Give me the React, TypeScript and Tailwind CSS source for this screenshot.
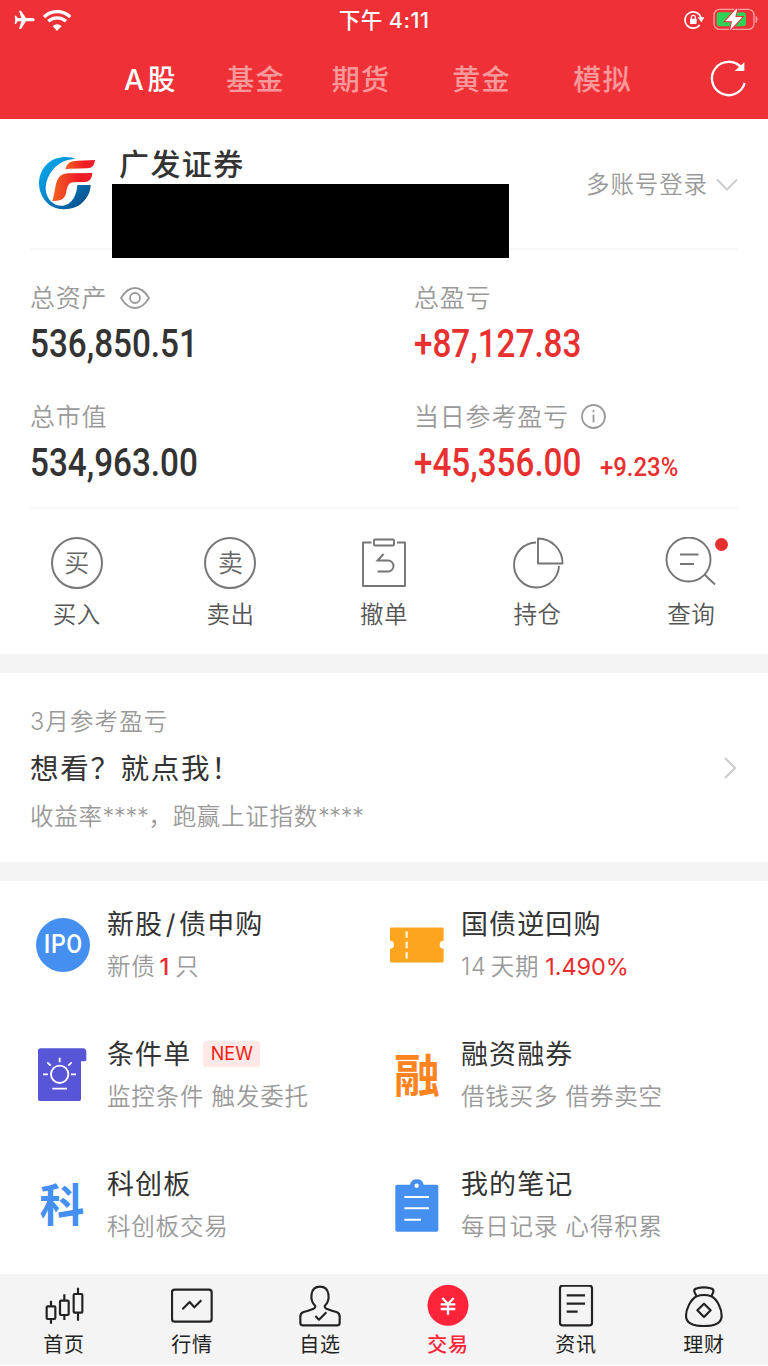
import { ReactNode } from "react";
import clsx from "clsx";

interface Service {
  id: string;
  title: ReactNode;
  desc: ReactNode;
  icon: ReactNode;
  isNew?: boolean;
}

const tabs = [
  { name: "A股", width: "w-[104px]" },
  { name: "基金", width: "w-[106px]" },
  { name: "期货", width: "w-[105px]" },
  { name: "黄金", width: "w-[136px]" },
  { name: "模拟", width: "w-[106px]" },
];

function StatusBar() {
  return (
    <div className="grid h-10 grid-cols-3 items-center text-white">
      <div className="flex items-center gap-2 pl-[14px]">
        <svg width="21" height="20" viewBox="43 30 63 60" fill="white">
          <path d="M58 32h6l15 22h18c5 0 8 2 8 5s-3 5-8 5H79L64 87h-6l7-23H54l-5 8h-4l2-13-2-12h4l5 7h11Z" />
        </svg>
        <svg width="28" height="21" viewBox="127 23 84 63">
          <path d="M130 44C153 22 186 22 209 44" fill="none" stroke="white" strokeWidth="10" />
          <path d="M143 57C158 43 181 43 196 57" fill="none" stroke="white" strokeWidth="10" />
          <path d="M156 71Q169 61 183 71L169 86Z" fill="white" />
        </svg>
      </div>
      <div className="text-center text-[21.500px] leading-10 font-medium tracking-[0.5px] whitespace-nowrap">
        下午 4:11
      </div>
      <div className="flex items-center justify-end gap-[9px] pr-[9px]">
        <svg width="20" height="20" viewBox="899 31 60 60" fill="none" stroke="white">
          <path d="M946 76A24.500 24.500 0 1 1 950 54" strokeWidth="5" />
          <path d="M940 53h20l-9 15Z" fill="white" stroke="none" />
          <rect x="917" y="57" width="20" height="16" rx="2" fill="white" stroke="none" />
          <path d="M921 58v-5a6 6 0 0 1 12 0v5" strokeWidth="3.500" />
        </svg>
        <svg width="46" height="24" viewBox="985 22 138 72">
          <rect x="988" y="26" width="120" height="60" rx="17" fill="none" stroke="#f9a0a3" strokeWidth="4" />
          <path d="M1114 47q8 9 0 19Z" fill="#f9a0a3" stroke="#f9a0a3" strokeWidth="2" />
          <rect x="996" y="35" width="88" height="42" rx="9" fill="#30d158" />
          <path
            d="M1055 24L1022 62h20l-6 27 37-40h-21l6-25Z"
            fill="white"
            stroke="#ef3137"
            strokeWidth="6"
            paintOrder="stroke"
          />
        </svg>
      </div>
    </div>
  );
}

function BrokerLogo() {
  return (
    <svg width="60" height="55" viewBox="111 78 180 165">
      <defs>
        <linearGradient id="ring" x1="0" y1="0" x2="1" y2="1">
          <stop offset="0" stopColor="#05b0f0" />
          <stop offset=".45" stopColor="#0786cc" />
          <stop offset="1" stopColor="#07427f" />
        </linearGradient>
        <linearGradient id="flag" x1="0" y1="0" x2="1" y2="0">
          <stop offset="0" stopColor="#f26322" />
          <stop offset=".65" stopColor="#ef1c24" />
          <stop offset="1" stopColor="#f02028" />
        </linearGradient>
      </defs>
      <path
        d="M226 86C212 79 165 74 138 105C108 138 110 190 145 222C168 242 220 246 248 217C265 200 271 185 272 165L232 165C230 195 217 222 190 227C160 230 136 205 137 172C140 132 168 100 203 90Z"
        fill="url(#ring)"
      />
      <path
        d="M196 118C200 100 212 92 232 92L285 90C283 108 275 114 262 115L215 116C207 116 200 118 196 118Z"
        fill="url(#flag)"
      />
      <path
        d="M157 213C165 190 165 160 175 145C182 133 195 130 210 130L277 129C276 147 268 155 255 156L220 157C205 157 202 170 198 190C194 208 180 214 157 213Z"
        fill="url(#flag)"
      />
    </svg>
  );
}

function Amount({ value, className }: { value: string; className?: string }) {
  return (
    <span
      className={clsx(
        "inline-block origin-left scale-x-[0.875] pt-px font-['Roboto'] text-[38px] leading-[46px] font-medium",
        className,
      )}
    >
      {value}
    </span>
  );
}

function Label({ children }: { children: ReactNode }) {
  return (
    <div className="flex h-[46px] items-center pt-px text-[25px] leading-[46px] font-[350] tracking-[0.8px] text-[#999]">
      {children}
    </div>
  );
}

const actions = [
  {
    name: "买入",
    icon: (
      <div className="flex size-[52px] items-center justify-center rounded-full border-2 border-[#777] text-[25px] leading-none font-[350] text-[#666]">
        买
      </div>
    ),
  },
  {
    name: "卖出",
    icon: (
      <div className="flex size-[52px] items-center justify-center rounded-full border-2 border-[#777] text-[25px] leading-none font-[350] text-[#666]">
        卖
      </div>
    ),
  },
  {
    name: "撤单",
    icon: (
      <svg width="52" height="52" viewBox="0 0 52 52" fill="none" stroke="#757575" strokeWidth="1.900">
        <path d="M13.500 5.500H5v43.500h42V5.500H39" strokeLinejoin="round" />
        <rect x="16" y="2.500" width="20" height="6" rx="1" />
        <path d="M25.500 17l-6 6.500h10.500a5.500 5.500 0 0 1 0 11H19.500" />
      </svg>
    ),
  },
  {
    name: "持仓",
    icon: (
      <svg width="52" height="52" viewBox="0 0 52 52" fill="none" stroke="#757575" strokeWidth="1.900">
        <path d="M24 5.500A22.500 22.500 0 1 0 47 29" />
        <path d="M26 1.500V26.500H50.500A24.500 24.500 0 0 0 26 1.500Z" strokeLinejoin="round" />
      </svg>
    ),
  },
  {
    name: "查询",
    icon: (
      <div className="relative">
        <svg width="52" height="52" viewBox="0 0 52 52" fill="none" stroke="#757575" strokeWidth="1.900">
          <circle cx="23.500" cy="22.500" r="22" />
          <path d="M39.500 37.500L50 47.500M15 17.500h18.500M15 27h14" />
        </svg>
        <span className="absolute top-[1px] -right-[11px] size-[13px] rounded-full bg-[#e93030]" />
      </div>
    ),
  },
];

const services: Service[] = [
  {
    id: "ipo",
    title: (
      <>
        新股<span className="mx-[2.500px]">/</span>债申购
      </>
    ),
    desc: (
      <>
        新债<span className="mr-[5px] ml-[4px] font-medium text-[#eb2c2c]">1</span>只
      </>
    ),
    icon: (
      <div className="flex size-[54px] items-center justify-center rounded-full bg-[#448fef] font-['Roboto'] text-[25px] font-medium text-white">
        <span className="scale-x-[0.92] tracking-[0.8px]">IPO</span>
      </div>
    ),
  },
  {
    id: "repo",
    title: "国债逆回购",
    desc: (
      <>
        14<span className="mr-[6px] ml-[4px]">天期</span>
        <span className="font-normal tracking-[-0.1px] text-[#eb2c2c]">1.490%</span>
      </>
    ),
    icon: (
      <svg width="54" height="36" viewBox="18 142 162 107">
        <path
          d="M22 143H175q4 0 4 4V183a12 12 0 0 0 0 24V244q0 4-4 4H22q-4 0-4-4V207a12 12 0 0 0 0-24V147q0-4 4-4Z"
          fill="#fea51f"
        />
        <path d="M68 155v19M68 186v19M68 217v19" stroke="white" strokeWidth="6" />
      </svg>
    ),
  },
  {
    id: "condition",
    title: "条件单",
    desc: "监控条件 触发委托",
    isNew: true,
    icon: (
      <svg width="50" height="54" viewBox="114 503 150 162">
        <path
          d="M122 504H248q11 0 11 11V538q0 5-5 5H243V657q0 5-5 5H119q-5 0-5-5V512q0-8 8-8Z"
          fill="#5855d6"
        />
        <g fill="none" stroke="white" strokeWidth="5.500">
          <circle cx="179" cy="582" r="26" />
          <path d="M129 582h15M213 582h15M179 532v14M142 546l10 10M215 546l-10 10M157 625h44" />
        </g>
      </svg>
    ),
  },
  {
    id: "margin",
    title: "融资融券",
    desc: "借钱买多 借券卖空",
    icon: <span className="text-[46px] leading-[50px] font-bold text-[#ff841f]">融</span>,
  },
  {
    id: "star",
    title: "科创板",
    desc: "科创板交易",
    icon: (
      <span className="mt-[2px] mr-[2px] text-[45px] leading-[50px] font-bold text-[#448fef]">
        科
      </span>
    ),
  },
  {
    id: "notes",
    title: "我的笔记",
    desc: "每日记录 心得积累",
    icon: (
      <svg width="44" height="54" viewBox="33 892 132 162">
        <path
          d="M39 912H78a21 21 0 0 1 41 0H158q5 0 5 5V1048q0 5-5 5H39q-5 0-5-5V917q0-5 5-5Z"
          fill="#448fef"
        />
        <circle cx="98" cy="915" r="6.500" fill="white" />
        <path d="M61 949h74M61 983h74M61 1017h50" stroke="white" strokeWidth="6" />
      </svg>
    ),
  },
];

const navItems = [
  {
    name: "首页",
    icon: (
      <g>
        <rect x="140" y="109" width="26" height="38" rx="3" />
        <rect x="180" y="92" width="26" height="43" rx="3" />
        <rect x="221" y="72" width="26" height="56" rx="3" />
        <path d="M153 92v17M153 147v14M193 73v19M193 135v15M234 53v19M234 128v24" />
      </g>
    ),
    viewBox: "129 45 126 126",
  },
  {
    name: "行情",
    icon: (
      <g>
        <rect x="518" y="59" width="119" height="96" rx="8" />
        <path d="M549 118l22-22 14 16 21-21" />
      </g>
    ),
    viewBox: "515 45 126 126",
  },
  {
    name: "自选",
    icon: (
      <g>
        <path d="M947 108C930 93 929 50 961 50S992 93 975 108C974 115 978 117 1010 126Q1020 129 1020 139V159Q1020 166 1012 166H910Q902 166 902 159V139Q902 129 912 126C944 117 948 115 947 108Z" />
        <path d="M947 138l11 11 22-22" />
      </g>
    ),
    viewBox: "898 45 126 126",
  },
  {
    name: "交易",
    icon: (
      <g stroke="none">
        <circle cx="193" cy="106" r="61.500" fill="#ff2439" />
        <path d="M176 84l17 18 17-18M193 102v32M171 103h44M171 117h44" stroke="white" strokeWidth="7" />
      </g>
    ),
    viewBox: "130 45 126 126",
    active: true,
  },
  {
    name: "资讯",
    icon: (
      <g>
        <rect x="529" y="47" width="96" height="119" rx="8" />
        <path d="M549 76h55M549 101h55M549 125h33" />
      </g>
    ),
    viewBox: "514 45 126 126",
  },
  {
    name: "理财",
    icon: (
      <g>
        <path d="M938 78C930 65 928 59 940 56Q960 50 981 56C993 59 990 66 984 78" />
        <path d="M939 80Q961 72 983 80C1002 90 1014 119 1014 138C1014 159 995 169 961 169S907 159 907 138C907 119 920 90 939 80Z" />
        <path d="M961 102l20 20-20 20-20-20Z" />
      </g>
    ),
    viewBox: "898 46 126 126",
  },
];

export default function App() {
  return (
    <div className="flex h-[1366px] w-[768px] flex-col overflow-hidden bg-white font-['Inter','Noto_Sans_CJK_SC',sans-serif] text-[#333]">
      <header className="h-[119px] bg-[#ef3137]">
        <StatusBar />
        <nav className="flex h-[78px] items-center pl-[98px] text-[28px] font-medium tracking-[1.2px] text-white">
          {tabs.map((tab, i) => (
            <span
              key={tab.name}
              className={clsx(
                "pt-px text-center",
                tab.width,
                i === 0 ? "pl-[3px] tracking-[3.500px]" : "pl-px opacity-50",
              )}
            >
              {tab.name}
            </span>
          ))}
          <svg
            className="ml-[55px]"
            width="37"
            height="38"
            viewBox="979 177 111 114"
            fill="none"
            stroke="white"
            strokeWidth="7"
          >
            <path d="M1083 246A50 50 0 1 1 1073 200" />
            <path d="M1080 188v20h-22Z" fill="white" strokeWidth="4" />
          </svg>
        </nav>
      </header>

      <section className="relative mx-[30px] flex h-[131px] border-b-2 border-[#f7f7f7]">
        <div className="pt-[37px] pl-[7px]">
          <BrokerLogo />
        </div>
        <h1 className="mt-[24px] ml-[22px] text-[30px] leading-[42px] font-medium tracking-[1.4px]">
          广发证券
        </h1>
        <div className="ml-auto flex h-[132px] items-center gap-2 text-[23.500px] font-[350] tracking-[0.9px] text-[#999]">
          多账号登录
          <svg width="22" height="14" viewBox="0 0 22 14" fill="none" stroke="#ccc" strokeWidth="2">
            <path d="M1 1.500l10 10 10-10" />
          </svg>
        </div>
        {/* masked account number */}
        <div className="absolute top-[65px] left-[82px] h-[74px] w-[396.500px] bg-black" />
      </section>

      <section className="mx-[30px] grid h-[259px] grid-cols-[384px_1fr] grid-rows-[119px_1fr] border-b-2 border-[#f7f7f7] pt-[24px]">
        <div>
          <Label>
            总资产
            <svg
              className="ml-[13px]"
              width="30"
              height="22"
              viewBox="0 0 30 22"
              fill="none"
              stroke="#999"
              strokeWidth="1.800"
            >
              <path d="M1 11Q7 1 15 1T29 11Q23 21 15 21T1 11Z" />
              <circle cx="15" cy="11" r="5" />
            </svg>
          </Label>
          <Amount value="536,850.51" />
        </div>
        <div>
          <Label>总盈亏</Label>
          <Amount value="+87,127.83" className="text-[#e93030]" />
        </div>
        <div>
          <Label>总市值</Label>
          <Amount value="534,963.00" />
        </div>
        <div>
          <Label>
            当日参考盈亏
            <svg
              className="ml-[12px]"
              width="25"
              height="25"
              viewBox="0 0 25 25"
              fill="none"
              stroke="#999"
              strokeWidth="1.800"
            >
              <circle cx="12.500" cy="12.500" r="11.500" />
              <path d="M12.500 10.500v8M12.500 6v2.300" />
            </svg>
          </Label>
          <div className="flex items-baseline text-[#e93030]">
            <Amount value="+45,356.00" className="w-[186px]" />
            <span className="origin-left scale-x-[0.92] font-['Roboto'] text-[26px] font-medium">
              +9.23%
            </span>
          </div>
        </div>
      </section>

      <section className="grid h-[145px] grid-cols-5 pt-[28px]">
        {actions.map((action) => (
          <div key={action.name} className="flex flex-col items-center">
            {action.icon}
            <span className="mt-[6px] text-[23.500px] leading-[40px] font-[350] tracking-[0.5px] text-[#555]">
              {action.name}
            </span>
          </div>
        ))}
      </section>

      <div className="h-[19px] bg-[#f4f4f4]" />

      <section className="flex h-[189px] items-center justify-between pr-[31px] pl-[30px]">
        <div className="pt-[2px]">
          <p className="text-[23.500px] leading-[47px] font-[350] tracking-[1.1px] text-[#999]">
            3月参考盈亏
          </p>
          <p className="text-[28.500px] leading-[48px] tracking-[1.7px]">想看？就点我！</p>
          <p className="text-[23.500px] leading-[47px] font-[350] tracking-[0.7px] text-[#999]">
            收益率<span className="tracking-[-0.300px]">****</span>，跑赢上证指数
            <span className="tracking-[-0.300px]">****</span>
          </p>
        </div>
        <svg width="14" height="22" viewBox="0 0 14 22" fill="none" stroke="#ccc" strokeWidth="2.200">
          <path d="M2 1l10 10L2 21" />
        </svg>
      </section>

      <div className="h-[19px] bg-[#f4f4f4]" />

      <section className="grid h-[393px] auto-rows-[130px] grid-cols-[354px_1fr]">
        {services.map((service) => (
          <div key={service.id} className="flex items-center pb-[2px] pl-9">
            <div className="flex w-[54px] justify-center">{service.icon}</div>
            <div className="ml-[17px] pt-[2px]">
              <div className="flex items-center text-[27px] leading-[42px] tracking-[1.1px]">
                {service.title}
                {service.isNew && (
                  <span className="mb-[2px] ml-3 h-[26px] rounded-[3px] bg-[#ffe8e8] px-[7.500px] text-[18px] leading-[26px] tracking-[0px] text-[#fb1c10]">
                    NEW
                  </span>
                )}
              </div>
              <p className="text-[23.500px] leading-[42px] font-[350] tracking-[0.8px] whitespace-pre text-[#999]">
                {service.desc}
              </p>
            </div>
          </div>
        ))}
      </section>

      <footer className="grid h-[91px] grid-cols-6 bg-[#f4f4f4] pt-[11px]">
        {navItems.map((item) => (
          <div key={item.name} className="flex flex-col items-center">
            <svg
              width="42"
              height="42"
              viewBox={item.viewBox}
              fill="none"
              stroke="#222"
              strokeWidth="6.500"
              strokeLinejoin="round"
            >
              {item.icon}
            </svg>
            <span
              className={clsx(
                "pt-px text-[20px] leading-[34px] tracking-[0.8px]",
                item.active ? "font-medium text-[#ff2439]" : "text-[#222]",
              )}
            >
              {item.name}
            </span>
          </div>
        ))}
      </footer>
    </div>
  );
}
